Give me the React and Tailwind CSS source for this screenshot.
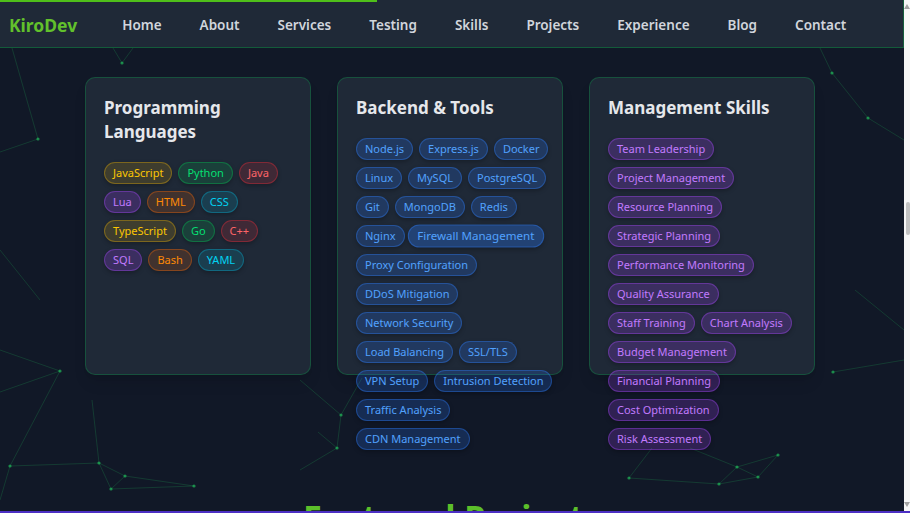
import React from "react";

const navLinks = ["Home", "About", "Services", "Testing", "Skills", "Projects", "Experience", "Blog", "Contact"];

const tone = {
  yellow: "bg-yellow-500/15 border-yellow-500/35 text-yellow-400",
  green: "bg-green-500/15 border-green-500/35 text-green-400",
  red: "bg-red-500/15 border-red-500/35 text-red-400",
  purple: "bg-purple-500/20 border-purple-500/35 text-purple-400",
  orange: "bg-orange-500/15 border-orange-500/35 text-orange-400",
  cyan: "bg-cyan-500/15 border-cyan-500/35 text-cyan-400",
  blue: "bg-blue-500/20 border-blue-500/35 text-blue-400",
};

const languages = [
  ["JavaScript", "yellow"], ["Python", "green"], ["Java", "red"],
  ["Lua", "purple"], ["HTML", "orange"], ["CSS", "cyan"],
  ["TypeScript", "yellow"], ["Go", "green"], ["C++", "red"],
  ["SQL", "purple"], ["Bash", "orange"], ["YAML", "cyan"],
];

const backend = [
  "Node.js", "Express.js", "Docker", "Linux", "MySQL", "PostgreSQL", "Git", "MongoDB", "Redis",
  "Nginx", "Firewall Management", "Proxy Configuration", "DDoS Mitigation", "Network Security",
  "Load Balancing", "SSL/TLS", "VPN Setup", "Intrusion Detection", "Traffic Analysis", "CDN Management",
];

const management = [
  "Team Leadership", "Project Management", "Resource Planning", "Strategic Planning",
  "Performance Monitoring", "Quality Assurance", "Staff Training", "Chart Analysis",
  "Budget Management", "Financial Planning", "Cost Optimization", "Risk Assessment",
];

function Tag({ label, color, active }) {
  return (
    <span
      className={`flex h-[22px] items-center rounded-full border px-[8px] text-[11px] whitespace-nowrap shadow-[0_2px_4px_rgba(0,0,0,0.25)] ${tone[color]} ${
        active ? "scale-105 bg-blue-500/30 shadow-[0_0_12px_rgba(59,130,246,0.45)]" : ""
      }`}
    >
      {label}
    </span>
  );
}

function SkillCard({ title, children }) {
  return (
    <div className="h-[298px] rounded-[10px] border border-green-500/25 bg-[#1f2937] py-[18px] pr-[9px] pl-[18px] shadow-lg">
      <h3 className="mb-[18px] text-[17px] leading-6 font-bold text-gray-200">{title}</h3>
      <div className="flex flex-wrap gap-x-[6px] gap-y-[7px]">{children}</div>
    </div>
  );
}

// faint particle network behind the page
const nodes = [
  [122, 63], [38, 139], [60, 371], [10, 466], [99, 463], [125, 476], [111, 489], [194, 486],
  [341, 415], [337, 448], [629, 478], [737, 467], [758, 477], [719, 484], [778, 455],
  [832, 73], [868, 118], [833, 372],
];
const lines = [
  [113, 48, 122, 63], [133, 48, 122, 63], [12, 48, 38, 139], [38, 139, 0, 152],
  [60, 371, 0, 392], [60, 371, 10, 466], [0, 350, 60, 371],
  [10, 466, 99, 463], [99, 463, 125, 476], [99, 463, 111, 489], [125, 476, 111, 489],
  [125, 476, 194, 486], [111, 489, 194, 486], [99, 463, 92, 400], [0, 500, 10, 466],
  [300, 380, 341, 415], [341, 415, 337, 448], [318, 432, 337, 448], [362, 378, 341, 415], [337, 448, 300, 470],
  [629, 478, 652, 448], [629, 478, 719, 484], [719, 484, 737, 467], [737, 467, 758, 477],
  [737, 467, 778, 455], [758, 477, 778, 455], [719, 484, 758, 477], [737, 467, 690, 448],
  [820, 48, 832, 73], [832, 73, 868, 118], [868, 118, 904, 140], [855, 290, 904, 330], [833, 372, 904, 360],
  [0, 250, 40, 300],
];

function Network() {
  return (
    <svg className="pointer-events-none absolute inset-0 h-full w-full" viewBox="0 0 904 511">
      {lines.map(([x1, y1, x2, y2], i) => (
        <line key={i} x1={x1} y1={y1} x2={x2} y2={y2} stroke="rgba(34,197,94,0.2)" strokeWidth="1" />
      ))}
      {nodes.map(([cx, cy], i) => (
        <circle key={i} cx={cx} cy={cy} r="1.6" fill="rgba(34,197,94,0.65)" />
      ))}
    </svg>
  );
}

export default function App() {
  return (
    <div className="flex h-[513px] w-[910px] flex-col overflow-hidden bg-[#111827] font-['Noto_Sans',sans-serif]">
      <div className="flex min-h-0 flex-1">
        <div className="relative flex-1 overflow-hidden bg-[#111827]">
          <Network />
          <header className="relative flex h-12 items-center border-r border-b border-green-600/40 bg-[#1f2937] pt-[4px] pl-[9px]">
            <div className="absolute top-0 left-0 h-[2px] w-[377px] bg-[#4fbf1a]" />
            <span className="text-[17.5px] font-bold text-[#62c12c]">KiroDev</span>
            <nav className="ml-[45px] flex gap-[38px]">
              {navLinks.map((l) => (
                <a key={l} className="text-[13.5px] font-semibold text-gray-300">
                  {l}
                </a>
              ))}
            </nav>
          </header>

          <section className="relative ml-[85px] grid w-[730px] grid-cols-3 gap-[26px] pt-[29px]">
            <SkillCard title="Programming Languages">
              {languages.map(([l, c]) => (
                <Tag key={l} label={l} color={c} />
              ))}
            </SkillCard>
            <SkillCard title="Backend & Tools">
              {backend.map((l) => (
                <Tag key={l} label={l} color="blue" active={l === "Firewall Management"} />
              ))}
            </SkillCard>
            <SkillCard title="Management Skills">
              {management.map((l) => (
                <Tag key={l} label={l} color="purple" />
              ))}
            </SkillCard>
          </section>

          <h2 className="relative mt-[122px] text-center text-[34px] leading-10 font-bold text-[#5cbf2a]">
            Featured Projects
          </h2>
        </div>

        <div className="flex w-[6px] flex-col items-end bg-[#f6f6f6]">
          <span className="mt-[4px] h-0 w-0 border-x-[3px] border-b-[5px] border-x-transparent border-b-[#a3a3a3]" />
          <span className="mt-[193px] h-[33px] w-[4px] rounded-full bg-[#c2c2c2]" />
          <span className="mt-auto mb-[4px] h-0 w-0 border-x-[3px] border-t-[5px] border-x-transparent border-t-[#a3a3a3]" />
        </div>
      </div>
      <div className="h-[2px] bg-[#4c2fc4]" />
    </div>
  );
}
